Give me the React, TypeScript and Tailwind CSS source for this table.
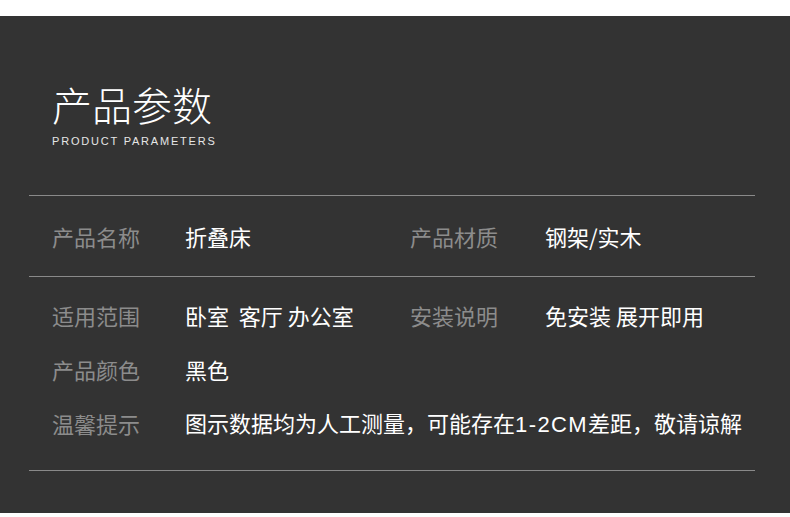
import React from 'react';

const cjk = "font-['Noto_Sans_CJK_SC','Noto_Sans',sans-serif]";

interface Cell {
  label: string;
  value: string;
}

const Row: React.FC<{ left: Cell; right?: Cell; className?: string }> = ({ left, right, className }) => (
  <div className={`flex items-center h-[44px] pl-[23px] ${className ?? ''}`}>
    <div className="w-[133px] shrink-0 text-[22px] leading-none text-[#8c8c8c]">{left.label}</div>
    <div className={`${right ? 'w-[225px]' : ''} shrink-0 text-[22px] leading-none text-white whitespace-pre`}>
      {left.value}
    </div>
    {right && (
      <>
        <div className="w-[135px] shrink-0 text-[22px] leading-none text-[#8c8c8c]">{right.label}</div>
        <div className="text-[22px] leading-none text-white whitespace-pre">{right.value}</div>
      </>
    )}
  </div>
);

const App: React.FC = () => {
  return (
    <div className={`w-[790px] h-[517px] bg-white pt-[16px] ${cjk}`}>
      <div className="h-[497px] bg-[#333333] pt-[66px]">
        <div className="pl-[52px]">
          <h1 className="text-[40px] leading-[44px] font-light text-white">产品参数</h1>
          <p className="mt-[10px] text-[11px] leading-none tracking-[1.8px] text-[#e6e6e6] font-['Liberation_Sans',Arial,sans-serif]">
            PRODUCT PARAMETERS
          </p>
        </div>

        <div className="ml-[29px] w-[726px] mt-[48px] border-t border-[#8a8a8a]">
          <Row
            className="mt-[18px] mb-[18px]"
            left={{ label: '产品名称', value: '折叠床' }}
            right={{ label: '产品材质', value: '钢架/实木' }}
          />
        </div>

        <div className="ml-[29px] w-[726px] border-t border-b border-[#8a8a8a] pt-[16px] pb-[25px]">
          <Row
            left={{ label: '适用范围', value: '卧室  客厅 办公室' }}
            right={{ label: '安装说明', value: '免安装 展开即用' }}
          />
          <Row className="mt-[10px]" left={{ label: '产品颜色', value: '黑色' }} />
          <div className="flex items-center h-[44px] mt-[10px] pl-[23px]">
            <div className="w-[133px] shrink-0 text-[22px] leading-none text-[#8c8c8c]">温馨提示</div>
            <div className="text-[22px] leading-none text-white whitespace-nowrap">
              图示数据均为人工测量，可能存在
              <span className="font-['Liberation_Sans',Arial,sans-serif] tracking-[1.4px]">1-2CM</span>
              差距，敬请谅解
            </div>
          </div>
        </div>
      </div>
    </div>
  );
};

export default App;
